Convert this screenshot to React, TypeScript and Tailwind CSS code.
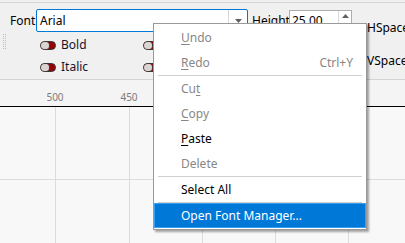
import React from 'react';

const menuItems: { label: React.ReactNode; shortcut?: string; enabled?: boolean; active?: boolean; sepAfter?: boolean }[] = [
  { label: <><u className="underline-offset-2">U</u>ndo</> },
  { label: <><u className="underline-offset-2">R</u>edo</>, shortcut: 'Ctrl+Y', sepAfter: true },
  { label: <>Cu<u className="underline-offset-2">t</u></> },
  { label: <><u className="underline-offset-2">C</u>opy</> },
  { label: <><u className="underline-offset-2">P</u>aste</>, enabled: true },
  { label: 'Delete', sepAfter: true },
  { label: 'Select All', enabled: true, sepAfter: true },
  { label: 'Open Font Manager...', enabled: true, active: true },
];

const Toggle = () => (
  <div className="relative flex h-[9px] w-[16px] rounded-full border border-[#383838] bg-[#9a0000]">
    <div className="h-full w-[9px] rounded-full bg-[#d9d5d5] border-r border-[#383838]" />
  </div>
);

const Grip = () => (
  <svg width="5" height="17" viewBox="0 0 5 17" className="self-start mt-[-1px]">
    {[0, 1, 2, 3, 4, 5, 6, 7].map((i) => (
      <g key={i} fill="#bdbdbd">
        <rect x="1" y={i * 2 + 1} width="1" height="1" />
        <rect x="3" y={i * 2 + 1} width="1" height="1" />
      </g>
    ))}
  </svg>
);

export default function App() {
  return (
    <div className="relative flex h-[243px] w-[405px] flex-col overflow-hidden bg-[#f8f8f8] font-['Noto_Sans',sans-serif] text-[12px] text-black">
      {/* top strip */}
      <div className="h-[3px] shrink-0 border-b border-[#d6d6d6] bg-[#f0f0f0]" />

      {/* toolbar */}
      <div className="flex h-[77px] shrink-0 border-b border-[#d3d3d3] bg-[#f0f0f0]">
        <div className="flex w-[367px] shrink-0 flex-col pt-[6px]">
          <div className="flex h-[23px] items-center pl-[10px]">
            <span className="w-[26px] leading-none">Font</span>
            <div className="flex h-[23px] w-[212px] items-center rounded-[2px] border border-[#0078d7] bg-white">
              <span className="flex-1 pl-[3px]">Arial</span>
              <div className="flex h-full w-[19px] items-center justify-center border-l border-[#d8d8d8]">
                <svg width="7" height="4" viewBox="0 0 7 4">
                  <polygon points="0,0 7,0 3.5,4" fill="#606060" />
                </svg>
              </div>
            </div>
            <span className="ml-[4px] w-[36px]">Height</span>
            <div className="ml-px mt-px flex h-[22px] w-[63px] self-start border border-[#adadad] bg-white">
              <span className="flex-1 pl-[2px] leading-[20px]">25.00</span>
              <div className="flex w-[13px] flex-col border-l border-[#dadada]">
                <div className="flex h-1/2 items-center justify-center">
                  <svg width="7" height="4" viewBox="0 0 7 4">
                    <polygon points="0,4 7,4 3.5,0" fill="#606060" />
                  </svg>
                </div>
              </div>
            </div>
          </div>
          <div className="mt-[2px] flex pl-[2px]">
            <Grip />
            <div className="ml-[33px] grid grid-cols-[103px_103px] grid-rows-[22px_22px]">
              {['Bold', '', 'Italic', ''].map((t, i) => (
                <div key={i} className="flex items-center gap-[5px]">
                  <Toggle />
                  <span className="text-[#14142e]">{t}</span>
                </div>
              ))}
            </div>
          </div>
        </div>
        <div className="flex flex-col pt-[14px] leading-[22px]">
          <span>HSpace</span>
          <span className="mt-[11px]">VSpace</span>
        </div>
      </div>

      {/* ruler */}
      <div className="flex h-[27px] shrink-0 border-b border-black bg-[#f4f4f4] pl-[18px] pt-[10px] text-[10px] leading-[14px] text-[#7c7c7c]">
        {['500', '450'].map((n) => (
          <span key={n} className="w-[74px] shrink-0 text-center">{n}</span>
        ))}
      </div>

      {/* canvas grid */}
      <div className="grid flex-1 grid-cols-[55px_73px_72px_72px_72px_1fr] grid-rows-[72px_1fr] gap-px bg-[#dcdcdc]">
        {Array.from({ length: 12 }).map((_, i) => (
          <div key={i} className="bg-[#f8f8f8]" />
        ))}
      </div>

      {/* context menu */}
      <div className="absolute left-[153px] top-[23px] w-[214px] border border-[#999999] bg-white py-px shadow-[2px_2px_2px_rgba(0,0,0,0.35)]">
        {menuItems.map((item, i) => (
          <React.Fragment key={i}>
            <div
              className={
                item.active
                  ? 'flex h-[25px] items-center border border-[#3a9ff0] bg-[#0078d7] pl-[26px] pr-[13px] text-white'
                  : `flex h-[25px] items-center pl-[27px] pr-[13px] ${item.enabled ? 'text-black' : 'text-[#878787]'}`
              }
            >
              <span className="flex-1">{item.label}</span>
              {item.shortcut && <span>{item.shortcut}</span>}
            </div>
            {item.sepAfter && <div className="mx-[4px] h-px bg-[#cfcfcf]" />}
          </React.Fragment>
        ))}
      </div>
    </div>
  );
}
